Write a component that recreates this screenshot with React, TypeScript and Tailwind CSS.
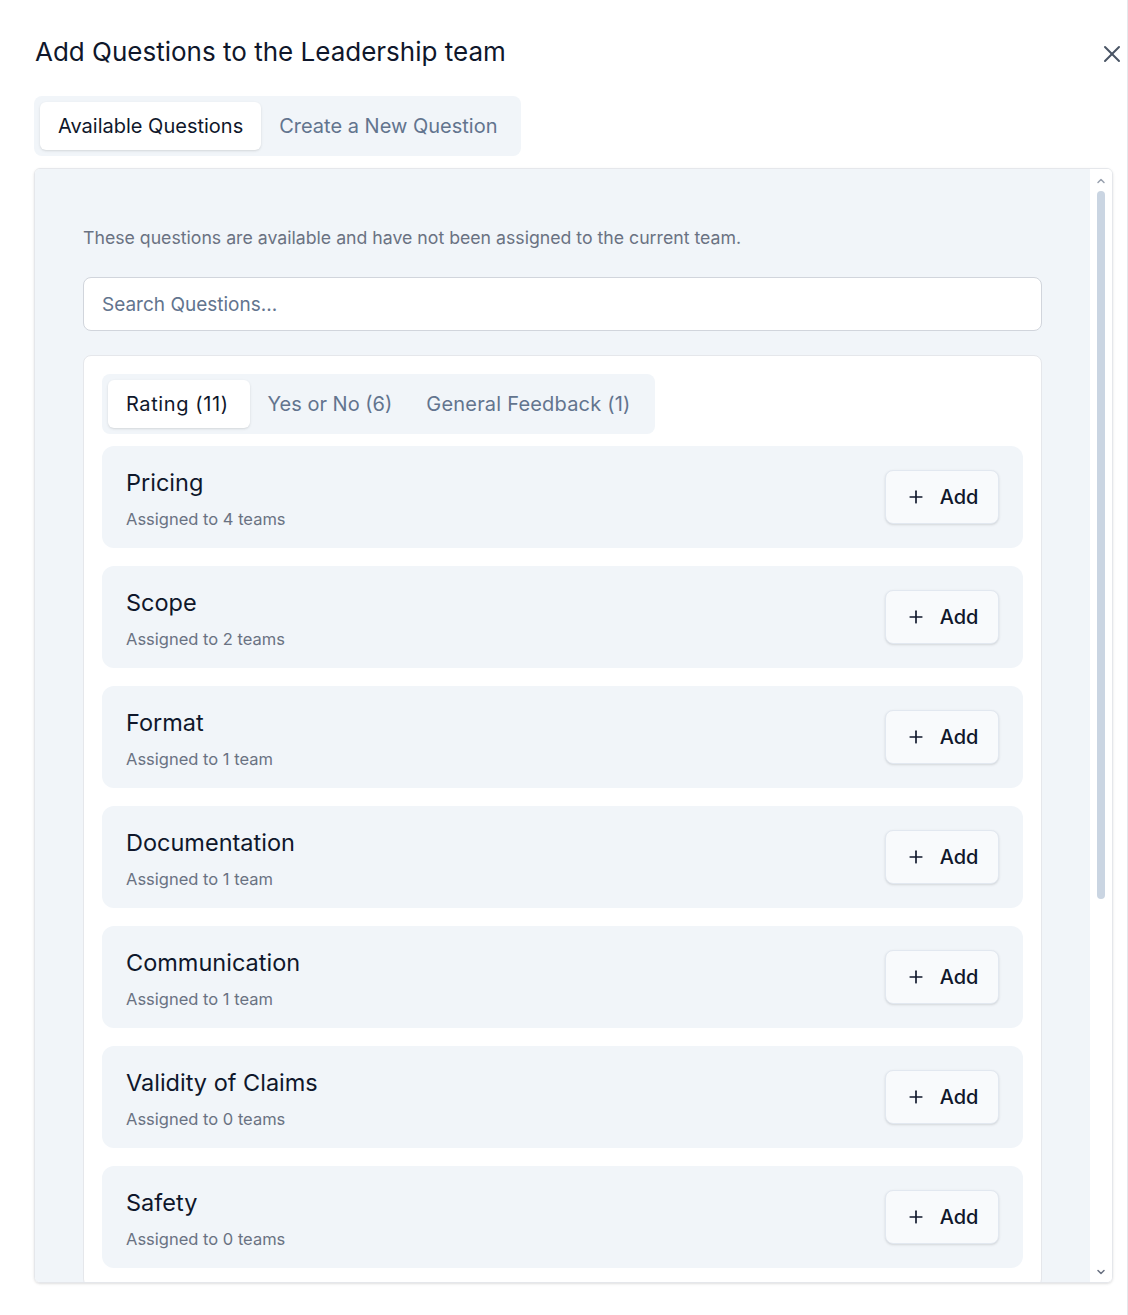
import { Plus, X, ChevronUp, ChevronDown } from "lucide-react";

const questions = [
  { title: "Pricing", teams: 4 },
  { title: "Scope", teams: 2 },
  { title: "Format", teams: 1 },
  { title: "Documentation", teams: 1 },
  { title: "Communication", teams: 1 },
  { title: "Validity of Claims", teams: 0 },
  { title: "Safety", teams: 0 },
];

function QuestionRow({ title, teams }: { title: string; teams: number }) {
  return (
    <div className="flex h-[102px] shrink-0 items-start justify-between rounded-xl bg-slate-100 pl-[24px] pr-[24px] pt-[22px]">
      <div className="flex flex-col">
        <span className="text-[23.5px] leading-[30px] text-slate-900">{title}</span>
        <span className="mt-[9px] text-[16.5px] leading-[24px] text-gray-500">
          Assigned to {teams} {teams === 1 ? "team" : "teams"}
        </span>
      </div>
      <button className="mt-[2px] flex h-[54px] w-[114px] items-center justify-center gap-[14px] rounded-lg border border-slate-200 bg-slate-50 shadow-sm">
        <Plus className="h-[20px] w-[20px] text-slate-900" strokeWidth={2} />
        <span className="text-[20px] font-medium text-slate-900">Add</span>
      </button>
    </div>
  );
}

export default function App() {
  return (
    <div className="relative h-[1315px] w-full border-r border-gray-200 bg-white font-['Inter',sans-serif]">
      {/* close */}
      <button className="absolute right-[1px] top-[40px] text-gray-600">
        <X className="h-[28px] w-[28px]" strokeWidth={1.7} />
      </button>

      <div className="px-[34px] pt-[36px]">
        <h2 className="pl-[1px] text-[26px] leading-[32px] text-slate-900">
          Add Questions to the Leadership team
        </h2>

        <div className="mt-[28px] inline-flex h-[60px] items-center rounded-lg bg-slate-100 p-[6px]">
          <div className="flex h-[48px] items-center rounded-md bg-white px-[18px] text-[20px] text-slate-900 shadow-sm">
            Available Questions
          </div>
          <div className="flex h-[48px] items-center px-[18px] text-[20px] text-slate-500">
            Create a New Question
          </div>
        </div>

        <div className="mt-[12px] flex h-[1115px] w-[1079px] overflow-hidden rounded-md border border-gray-200 shadow-sm">
          <div className="flex flex-1 flex-col overflow-hidden bg-slate-100 px-[48px] pt-[57px]">
            <p className="text-[17.7px] leading-[24px] text-gray-500">
              These questions are available and have not been assigned to the current team.
            </p>

            <div className="mt-[27px] flex h-[54px] shrink-0 items-center rounded-lg border border-gray-300 bg-white px-[18px] pt-[2px]">
              <span className="text-[19px] text-slate-500">Search Questions...</span>
            </div>

            <div className="mt-[24px] flex shrink-0 flex-col rounded-lg border border-gray-200 bg-white p-[18px]">
              <div className="inline-flex h-[60px] self-start items-center rounded-lg bg-slate-100 p-[6px]">
                <div className="flex h-[48px] items-center rounded-md bg-white pl-[18px] pr-[21px] text-[20px] tracking-[0.6px] text-slate-900 shadow-sm">
                  Rating (11)
                </div>
                <div className="flex h-[48px] items-center px-[18px] text-[20px] text-slate-500">
                  Yes or No (6)
                </div>
                <div className="flex h-[48px] items-center pl-[16px] pr-[18px] text-[20px] tracking-[0.2px] text-slate-500">
                  General Feedback (1)
                </div>
              </div>

              <div className="mt-[12px] flex flex-col gap-[18px]">
                {questions.map((q) => (
                  <QuestionRow key={q.title} title={q.title} teams={q.teams} />
                ))}
              </div>
            </div>
          </div>

          {/* scrollbar */}
          <div className="flex w-[22px] shrink-0 flex-col items-center bg-white pt-[6px] pb-[4px]">
            <ChevronUp className="h-[12px] w-[12px] text-gray-400" strokeWidth={3} />
            <div className="mt-[4px] h-[708px] w-[8px] rounded-full bg-slate-300" />
            <div className="flex-1" />
            <ChevronDown className="h-[12px] w-[12px] text-gray-500" strokeWidth={3} />
          </div>
        </div>
      </div>
    </div>
  );
}
